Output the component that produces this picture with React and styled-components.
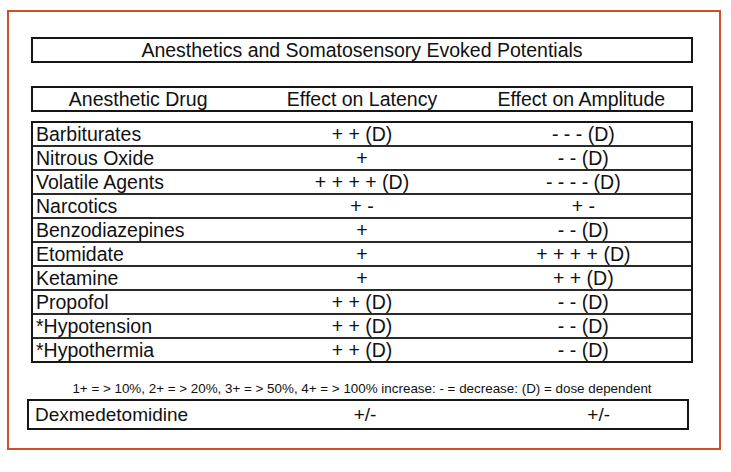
import React from "react";
import styled, { createGlobalStyle } from "styled-components";

const Global = createGlobalStyle`
  html, body { margin: 0; padding: 0; background: #ffffff; }
  body { font-family: "Liberation Sans", Arial, sans-serif; color: #111; }
`;

const Frame = styled.div`
  box-sizing: border-box;
  margin: 10px 0 0 7px;
  width: 714px;
  height: 440px;
  border: 2px solid #cf4f28;
  padding: 25px 0 0 22px;
  display: flex;
  flex-direction: column;
`;

const Box = styled.div`
  box-sizing: border-box;
  width: 662px;
  border: 2px solid #161616;
  margin-top: ${(p) => p.$mt || 0}px;
  margin-left: ${(p) => p.$ml || 0}px;
`;

const Title = styled.div`
  height: 22px;
  line-height: 22px;
  text-align: center;
  font-size: 19.5px;
`;

const Row = styled.div`
  display: grid;
  grid-template-columns: 1fr 1fr 1fr;
  height: ${(p) => p.$h || 22}px;
  line-height: ${(p) => p.$h || 22}px;
  font-size: 19.5px;
  border-top: ${(p) => (p.$sep ? "2px solid #2a2a2a" : "none")};
`;

const Cell = styled.div`
  text-align: ${(p) => p.$align || "center"};
  padding-left: ${(p) => p.$pl || 0}px;
  padding-right: ${(p) => p.$pr || 0}px;
  white-space: nowrap;
`;

const Note = styled.div`
  width: 662px;
  margin-top: 17px;
  text-align: center;
  font-size: 13.4px;
  line-height: 17px;
  white-space: nowrap;
`;

const DexRow = styled.div`
  display: grid;
  grid-template-columns: 300px 60px 215px;
  height: 27px;
  line-height: 27px;
  font-size: 19px;
  padding-left: 6px;
`;

const rows = [
  ["Barbiturates", "+ + (D)", "- - - (D)"],
  ["Nitrous Oxide", "+", "- - (D)"],
  ["Volatile Agents", "+ + + + (D)", "- - - - (D)"],
  ["Narcotics", "+ -", "+ -"],
  ["Benzodiazepines", "+", "- - (D)"],
  ["Etomidate", "+", "+ + + + (D)"],
  ["Ketamine", "+", "+ + (D)"],
  ["Propofol", "+ + (D)", "- - (D)"],
  ["*Hypotension", "+ + (D)", "- - (D)"],
  ["*Hypothermia", "+ + (D)", "- - (D)"],
];

export default function App() {
  return (
    <>
      <Global />
      <Frame>
        <Box>
          <Title>Anesthetics and Somatosensory Evoked Potentials</Title>
        </Box>
        <Box $mt={23}>
          <Row>
            <Cell $pr={9}>Anesthetic Drug</Cell>
            <Cell>Effect on Latency</Cell>
            <Cell>Effect on Amplitude</Cell>
          </Row>
        </Box>
        <Box $mt={9}>
          {rows.map((r, i) => (
            <Row key={r[0]} $sep={i > 0}>
              <Cell $align="left" $pl={3}>{r[0]}</Cell>
              <Cell>{r[1]}</Cell>
              <Cell $pl={4}>{r[2]}</Cell>
            </Row>
          ))}
        </Box>
        <Note>
          1+ = &gt; 10%, 2+ = &gt; 20%, 3+ = &gt; 50%, 4+ = &gt; 100% increase: - = decrease: (D) = dose dependent
        </Note>
        <Box $mt={2} $ml={-4}>
          <DexRow>
            <Cell $align="left">Dexmedetomidine</Cell>
            <Cell>+/-</Cell>
            <Cell $align="right">+/-</Cell>
          </DexRow>
        </Box>
      </Frame>
    </>
  );
}
